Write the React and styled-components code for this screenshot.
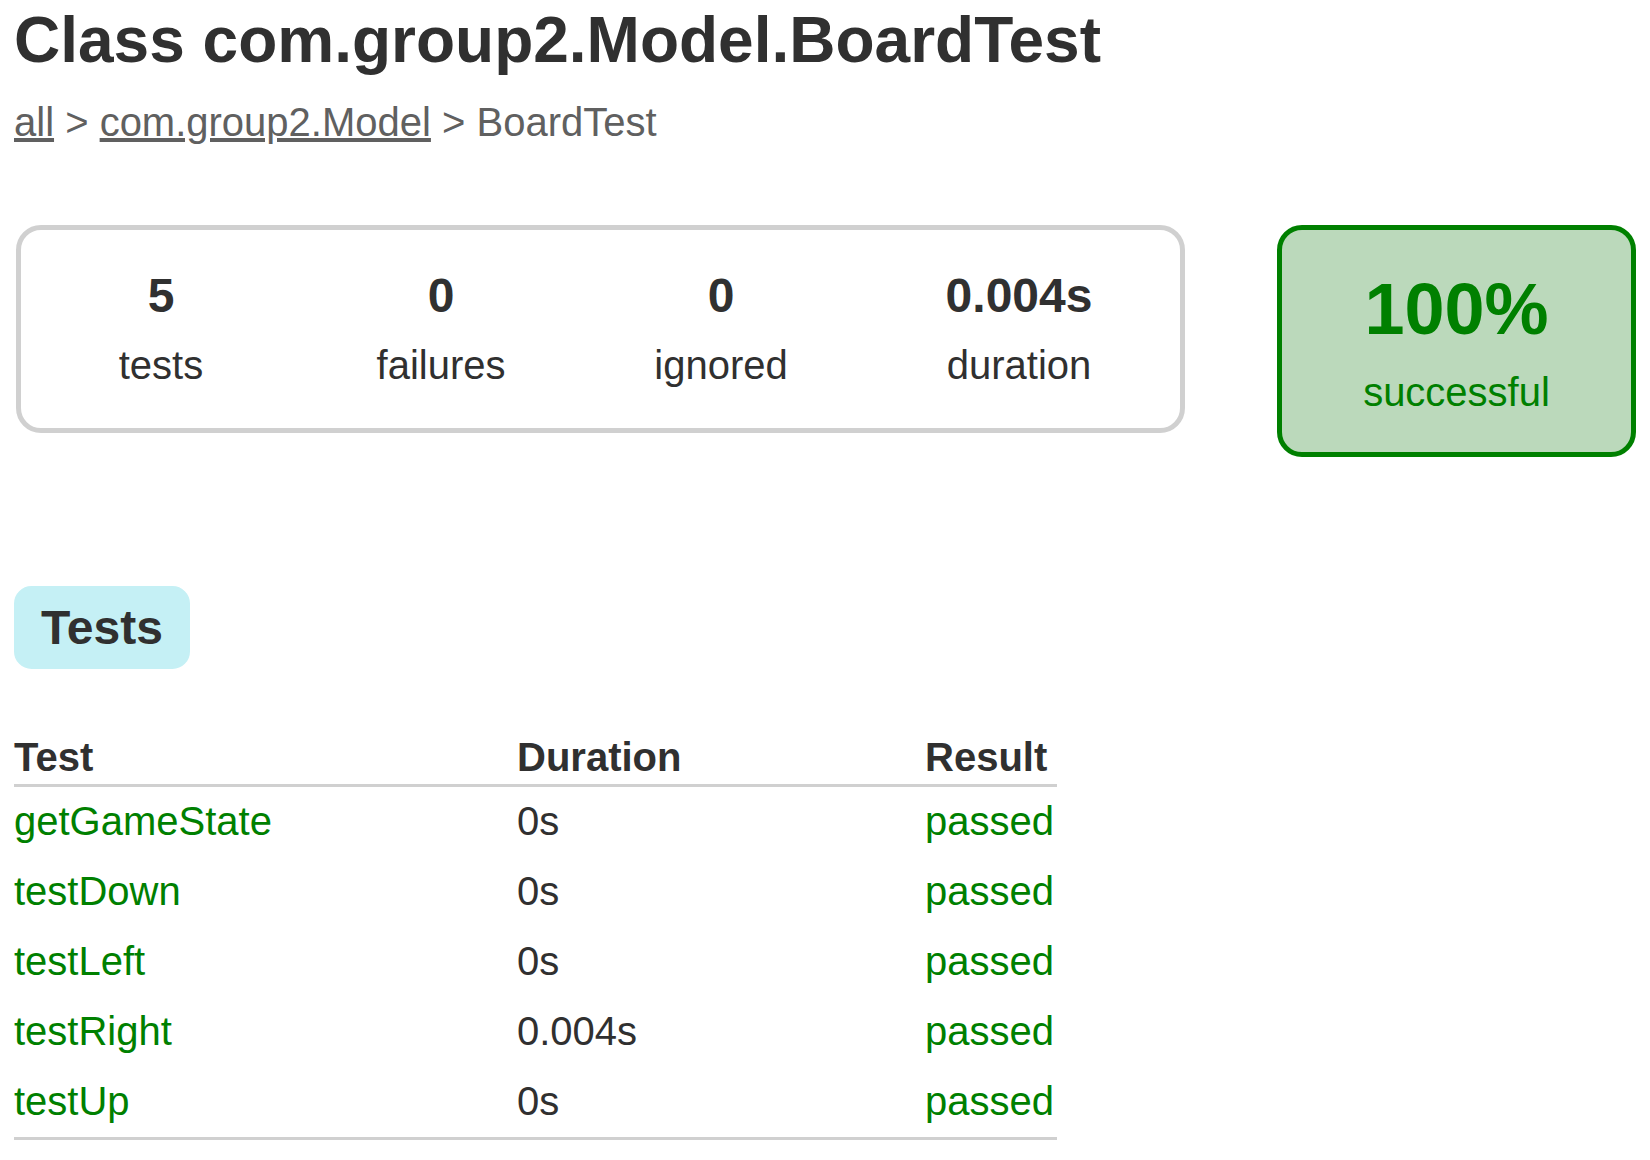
import React from 'react';
import styled, { createGlobalStyle } from 'styled-components';

const GlobalStyle = createGlobalStyle`
  body {
    margin: 0;
    background: #fff;
    font-family: "Liberation Sans", Arial, sans-serif;
    font-size: 40px;
    color: #303030;
  }
`;

const tests = [
  { name: 'getGameState', duration: '0s', result: 'passed' },
  { name: 'testDown', duration: '0s', result: 'passed' },
  { name: 'testLeft', duration: '0s', result: 'passed' },
  { name: 'testRight', duration: '0.004s', result: 'passed' },
  { name: 'testUp', duration: '0s', result: 'passed' },
];

const counters = [
  { value: '5', label: 'tests', width: 280 },
  { value: '0', label: 'failures', width: 280 },
  { value: '0', label: 'ignored', width: 280 },
  { value: '0.004s', label: 'duration', width: 316 },
];

export default function App() {
  return (
    <>
      <GlobalStyle />
      <Content>
        <Title>Class com.group2.Model.BoardTest</Title>
        <Breadcrumbs>
          <a href="#all">all</a> &gt; <a href="#pkg">com.group2.Model</a> &gt; BoardTest
        </Breadcrumbs>

        <Summary>
          <SummaryGroup>
            {counters.map(c => (
              <InfoBox key={c.label} width={c.width}>
                <Counter>{c.value}</Counter>
                <p>{c.label}</p>
              </InfoBox>
            ))}
          </SummaryGroup>
          <SuccessRate>
            <Percent>100%</Percent>
            <p>successful</p>
          </SuccessRate>
        </Summary>

        <TabLinks>
          <Tab>
            <h2>Tests</h2>
          </Tab>
        </TabLinks>

        <TestTable>
          <thead>
            <tr>
              <Th width={503}>Test</Th>
              <Th width={408}>Duration</Th>
              <Th width={132}>Result</Th>
            </tr>
          </thead>
          <tbody>
            {tests.map(t => (
              <tr key={t.name}>
                <Td success>{t.name}</Td>
                <Td>{t.duration}</Td>
                <Td success>{t.result}</Td>
              </tr>
            ))}
          </tbody>
        </TestTable>
      </Content>
    </>
  );
}

const Content = styled.div`
  padding: 3px 14px 0;
`;

const Title = styled.h1`
  margin: 0 0 23px;
  font-size: 64px;
  font-weight: bold;
`;

const Breadcrumbs = styled.div`
  color: #606060;
  a {
    color: #606060;
    text-decoration: underline;
  }
`;

const Summary = styled.div`
  display: flex;
  align-items: flex-start;
  margin-top: 80px;
`;

const SummaryGroup = styled.div`
  display: flex;
  margin-left: 2px;
  padding-right: 3px;
  border: 5px solid #d0d0d0;
  border-radius: 25px;
`;

const InfoBox = styled.div`
  width: ${props => props.width}px;
  padding: 37.5px 0 40.5px;
  text-align: center;
  p {
    margin: 0;
  }
`;

const Counter = styled.p`
  font-size: 48px;
  font-weight: bold;
  && {
    margin-bottom: 20px;
  }
`;

const SuccessRate = styled.div`
  width: 350px;
  margin-left: 92px;
  padding: 37.5px 0;
  text-align: center;
  color: #008000;
  background-color: #bbd9bb;
  border: 5px solid #008000;
  border-radius: 25px;
  p {
    margin: 0;
  }
`;

const Percent = styled.p`
  font-size: 72px;
  font-weight: bold;
  && {
    margin-bottom: 20px;
  }
`;

const TabLinks = styled.ul`
  display: flex;
  margin: 129px 0 0;
  padding: 0;
  list-style: none;
`;

const Tab = styled.li`
  padding: 12px 25px;
  background-color: #c5f0f5;
  border: 2.5px solid #c5f0f5;
  border-radius: 17.5px;
  h2 {
    margin: 0;
    font-size: 48px;
    font-weight: bold;
  }
`;

const TestTable = styled.table`
  margin-top: 66px;
  border-collapse: collapse;
  tbody tr:last-child td {
    border-bottom: 3px solid #d0d0d0;
  }
`;

const Th = styled.th`
  width: ${props => props.width}px;
  padding: 0 0 4px;
  text-align: left;
  font-weight: bold;
  border-bottom: 3px solid #d0d0d0;
`;

const Td = styled.td`
  padding: 11.5px 0 13.5px;
  text-align: left;
  color: ${props => (props.success ? '#008000' : '#303030')};
`;
